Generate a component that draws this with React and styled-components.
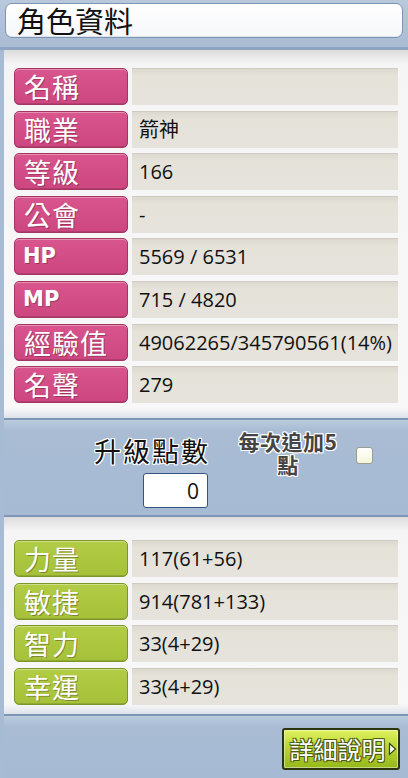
import styled, { createGlobalStyle } from 'styled-components';

const GlobalStyle = createGlobalStyle`
  html, body {
    margin: 0;
    padding: 0;
    background: #a7bbd4;
  }
  body {
    font-family: "Noto Sans CJK TC", "Noto Sans", sans-serif;
  }
`;

const infoRows = [
  { id: 'name', label: '名稱', value: '' },
  { id: 'job', label: '職業', value: '箭神' },
  { id: 'level', label: '等級', value: '166' },
  { id: 'guild', label: '公會', value: '-' },
  { id: 'hp', label: 'HP', value: '5569 / 6531', latin: true },
  { id: 'mp', label: 'MP', value: '715 / 4820', latin: true },
  { id: 'exp', label: '經驗值', value: '49062265/345790561(14%)' },
  { id: 'fame', label: '名聲', value: '279' },
];

const statRows = [
  { id: 'str', label: '力量', value: '117(61+56)' },
  { id: 'dex', label: '敏捷', value: '914(781+133)' },
  { id: 'int', label: '智力', value: '33(4+29)' },
  { id: 'luk', label: '幸運', value: '33(4+29)' },
];

function App() {
  return (
    <>
      <GlobalStyle />
      <Frame>
        <Header>
          <TitleBox>角色資料</TitleBox>
        </Header>

        <Panel $top={18} $bottom={15}>
          {infoRows.map(({ id, label, value, latin }) => (
            <Row key={id}>
              <Label $latin={latin}>{label}</Label>
              <Value>{value}</Value>
            </Row>
          ))}
        </Panel>

        <PointsBar>
          <PointsColumn>
            <PointsTitle>升級點數</PointsTitle>
            <PointsInput type="text" value="0" readOnly />
          </PointsColumn>
          <AutoText>
            <span>每次追加5</span>
            <span>點</span>
          </AutoText>
          <CheckBox />
        </PointsBar>

        <Panel $top={23} $bottom={9}>
          {statRows.map(({ id, label, value }) => (
            <Row key={id}>
              <Label $green>{label}</Label>
              <Value>{value}</Value>
            </Row>
          ))}
        </Panel>

        <Footer>
          <DetailButton type="button">
            詳細說明
            <svg width="9" height="14" viewBox="0 0 9 14">
              <polygon points="1.5,1.5 7.5,7 1.5,12.5" fill="#fff" stroke="#3a4410" strokeWidth="1.2" />
            </svg>
          </DetailButton>
        </Footer>
      </Frame>
    </>
  );
}

const Frame = styled.div`
  width: 408px;
  height: 778px;
  display: flex;
  flex-direction: column;
  background: #a7bbd4;
  overflow: hidden;
`;

const Header = styled.div`
  padding: 3px 5px 9px 5px;
  background: linear-gradient(#b9c8db, #a9bcd3);
  border-bottom: 3px solid #8ea4c1;
`;

const TitleBox = styled.div`
  height: 33px;
  display: flex;
  align-items: center;
  padding-left: 11px;
  background: linear-gradient(#ffffff, #f6f7f9);
  border: 1px solid #7d95b5;
  border-radius: 7px;
  box-shadow: inset 0 -1px 0 #dfe4ec;
  font-size: 29px;
  color: #111;
  line-height: 1;
`;

const Panel = styled.div`
  margin-left: 4px;
  display: flex;
  flex-direction: column;
  gap: 5.6px;
  padding: ${(p) => p.$top}px 10px ${(p) => p.$bottom}px 10px;
  background: linear-gradient(#dcdcdc 0, #f5f5f5 14px, #f8f8f8 calc(100% - 10px), #dde2e9 100%);
`;

const Row = styled.div`
  display: flex;
  gap: 4px;
  height: 37px;
`;

const Label = styled.div`
  width: 114px;
  box-sizing: border-box;
  flex-shrink: 0;
  display: flex;
  align-items: center;
  padding-left: ${(p) => (p.$latin ? 8 : 9)}px;
  border-radius: 5px;
  border: 1px solid ${(p) => (p.$green ? '#7d962a' : '#a33561')};
  background: ${(p) =>
    p.$green
      ? 'linear-gradient(#b2cc45, #a5c039)'
      : 'linear-gradient(#d9558d, #cd467f)'};
  box-shadow: inset 0 1px 0 rgba(255, 255, 255, 0.35), inset 0 -1px 0 rgba(0, 0, 0, 0.12);
  color: #fff;
  font-family: ${(p) => (p.$latin ? '"DejaVu Sans", sans-serif' : '"Noto Sans CJK TC", sans-serif')};
  font-weight: ${(p) => (p.$latin ? 700 : 400)};
  font-size: ${(p) => (p.$latin ? 21 : 27)}px;
  letter-spacing: ${(p) => (p.$latin ? 0 : 1)}px;
  line-height: 1;
  text-shadow: 1px 1px 0 rgba(60, 20, 30, 0.35);
`;

const Value = styled.div`
  flex: 1;
  display: flex;
  align-items: center;
  padding-left: 7px;
  background: linear-gradient(#dcd9d0, #e5e2da 20%, #e6e3dc);
  border-top: 1px solid #d0ccc2;
  color: #111;
  font-family: "Open Sans", "Noto Sans CJK TC", sans-serif;
  font-size: 20px;
  line-height: 1;
  white-space: nowrap;
`;

const outline = `
  -1px -1px 0 #fff, 1px -1px 0 #fff, -1px 1px 0 #fff, 1px 1px 0 #fff,
  0 -1px 0 #fff, 0 1px 0 #fff, -1px 0 0 #fff, 1px 0 0 #fff
`;

const PointsBar = styled.div`
  margin-left: 4px;
  height: 99px;
  box-sizing: border-box;
  display: flex;
  align-items: flex-start;
  padding: 10px 0 0 82px;
  border-top: 2px solid #7e96b6;
  border-bottom: 2px solid #7e96b6;
  background: linear-gradient(#bccbdd 0, #a9bcd4 10px, #a6bad3 100%);
`;

const PointsColumn = styled.div`
  margin-top: 6px;
  width: 122px;
  display: flex;
  flex-direction: column;
  align-items: flex-end;
  gap: 7px;
`;

const PointsTitle = styled.div`
  font-size: 27px;
  line-height: 30px;
  letter-spacing: 2px;
  margin-right: -2px;
  color: #111;
  text-shadow: ${outline};
`;

const PointsInput = styled.input`
  width: 65px;
  height: 35px;
  box-sizing: border-box;
  padding: 0 8px 0 0;
  border: 1px solid #36547f;
  border-radius: 3px;
  background: #fff;
  font-family: "Open Sans", sans-serif;
  font-size: 21px;
  color: #111;
  text-align: right;
  outline: none;
`;

const AutoText = styled.div`
  margin-left: 24px;
  width: 112px;
  display: flex;
  flex-direction: column;
  align-items: center;
  font-size: 21px;
  font-weight: 700;
  line-height: 23px;
  letter-spacing: 0.5px;
  color: #444;
  text-shadow: ${outline};
`;

const CheckBox = styled.span`
  margin: 17px 0 0 12px;
  width: 17px;
  height: 17px;
  box-sizing: border-box;
  border: 1px solid #9b9c8e;
  border-radius: 3px;
  background: linear-gradient(#ffffff, #f6f6de);
`;

const Footer = styled.div`
  flex: 1;
  margin-left: 4px;
  display: flex;
  justify-content: flex-end;
  align-items: flex-start;
  padding: 12px 8px 0 0;
  border-top: 2px solid #7e96b6;
  background: linear-gradient(#bccbdd 0, #a9bcd4 10px, #a6bad3 100%);
`;

const DetailButton = styled.button`
  width: 118px;
  height: 42px;
  display: flex;
  align-items: center;
  justify-content: center;
  gap: 2px;
  padding: 0 0 0 4px;
  border: 2px solid #2d3510;
  border-radius: 3px;
  background: linear-gradient(#e0f25e, #bad635 45%, #96b81a);
  box-shadow: inset 0 0 0 1px rgba(255, 255, 255, 0.45);
  color: #fff;
  font-family: "Noto Sans CJK TC", sans-serif;
  font-size: 24px;
  line-height: 1;
  text-shadow: -1px -1px 0 #4a5a12, 1px -1px 0 #4a5a12, -1px 1px 0 #4a5a12, 1px 1px 0 #4a5a12;
  cursor: pointer;
`;

export default App;
